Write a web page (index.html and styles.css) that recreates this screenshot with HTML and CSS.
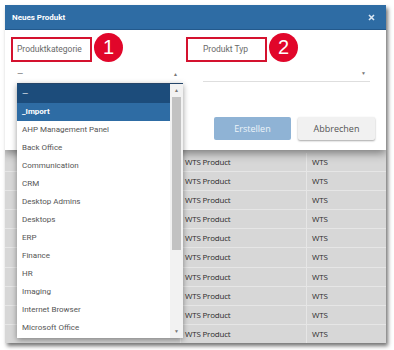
FILE: index.html
```html
<html>
<head>
<meta name="viewport" content="width=device-width, initial-scale=1">
<title>Neues Produkt</title>
<link rel="stylesheet" href="styles.css">
</head>
<body>
<div class="frame">
  <div class="dialog">
    <div class="dialog-head">
      <span class="dialog-title">Neues Produkt</span>
      <svg class="close" width="7" height="7" viewBox="0 0 7 7"><path d="M1 1L6 6M6 1L1 6" stroke="#dce8f4" stroke-width="1.6"/></svg>
    </div>
    <div class="dialog-body">
      <div class="fields">
        <div class="field field-cat">
          <div class="label-row">
            <span class="mark">Produktkategorie</span>
            <span class="badge">1</span>
          </div>
          <div class="select">
            <span>&mdash;</span>
            <span class="arrow">&#9650;</span>
          </div>
        </div>
        <div class="field field-typ">
          <div class="label-row">
            <span class="mark mark-typ">Produkt Typ</span>
            <span class="badge">2</span>
          </div>
          <div class="select select-line">
            <span></span>
            <span class="arrow">&#9660;</span>
          </div>
        </div>
      </div>
      <div class="actions">
        <button class="btn btn-primary">Erstellen</button>
        <button class="btn btn-cancel">Abbrechen</button>
      </div>
    </div>
  </div>

  <div class="table">
    <div class="row"><span class="c0"></span><span class="c1">WTS Product</span><span class="c2">WTS</span></div>
    <div class="row"><span class="c0"></span><span class="c1">WTS Product</span><span class="c2">WTS</span></div>
    <div class="row"><span class="c0"></span><span class="c1">WTS Product</span><span class="c2">WTS</span></div>
    <div class="row"><span class="c0"></span><span class="c1">WTS Product</span><span class="c2">WTS</span></div>
    <div class="row"><span class="c0"></span><span class="c1">WTS Product</span><span class="c2">WTS</span></div>
    <div class="row"><span class="c0"></span><span class="c1">WTS Product</span><span class="c2">WTS</span></div>
    <div class="row"><span class="c0"></span><span class="c1">WTS Product</span><span class="c2">WTS</span></div>
    <div class="row"><span class="c0"></span><span class="c1">WTS Product</span><span class="c2">WTS</span></div>
    <div class="row"><span class="c0"></span><span class="c1">WTS Product</span><span class="c2">WTS</span></div>
    <div class="row"><span class="c0"></span><span class="c1">WTS Product</span><span class="c2">WTS</span></div>
  </div>

  <div class="dropdown">
    <ul class="options">
      <li class="opt-head">&mdash;</li>
      <li class="opt-active">_Import</li>
      <li>AHP Management Panel</li>
      <li>Back Office</li>
      <li>Communication</li>
      <li>CRM</li>
      <li>Desktop Admins</li>
      <li>Desktops</li>
      <li>ERP</li>
      <li>Finance</li>
      <li>HR</li>
      <li>Imaging</li>
      <li>Internet Browser</li>
      <li>Microsoft Office</li>
    </ul>
    <div class="scrollbar">
      <span class="sb-arrow">&#9650;</span>
      <span class="sb-thumb"></span>
      <span class="sb-arrow">&#9660;</span>
    </div>
  </div>
</div>
</body>
</html>
```

FILE: styles.css
```css
html, body {
  margin: 0;
  padding: 0;
  background: #fff;
}

.frame {
  position: relative;
  margin: 5px 0 0 5px;
  width: 381px;
  height: 338px;
  overflow: hidden;
  background: #d7d7d7;
  box-shadow: 2px 3px 4px rgba(0, 0, 0, 0.55);
  font-family: Roboto, "Liberation Sans", sans-serif;
}

.dialog {
  position: relative;
  z-index: 2;
  background: #fff;
  box-shadow: 0 3px 9px rgba(0, 0, 0, 0.45);
}

.dialog-head {
  height: 24px;
  border-bottom: 1px solid #23598c;
  background: #2e6ca4;
  display: flex;
  justify-content: space-between;
  align-items: center;
  padding: 0 11px 0 7px;
}

.dialog-title {
  color: #fff;
  font-size: 8px;
  font-weight: bold;
}

.dialog-body {
  height: 120px;
  box-sizing: border-box;
  padding-top: 3px;
}

.fields {
  display: flex;
}

.field-cat {
  width: 175px;
  padding-left: 6px;
}

.field-typ {
  width: 184px;
}

.label-row {
  display: flex;
  align-items: flex-start;
  height: 30px;
}

.mark {
  display: block;
  box-sizing: border-box;
  width: 81px;
  height: 25px;
  border: 2px solid #d4122f;
  padding: 5px 0 0 4px;
  font-size: 8.5px;
  color: #6a6a6a;
  margin-top: 4px;
}

.mark-typ {
  padding-left: 15px;
}

.badge {
  width: 29px;
  height: 29px;
  border-radius: 50%;
  background: #e1062a;
  color: #fff;
  font-family: "Liberation Sans", sans-serif;
  font-size: 20px;
  line-height: 29px;
  text-align: center;
  margin-left: 2px;
}

.select {
  display: flex;
  justify-content: space-between;
  align-items: center;
  box-sizing: border-box;
  height: 17px;
  margin: 2px 4px 0 6px;
  padding-right: 4px;
  font-size: 8px;
  color: #555;
}

.field-typ .select {
  margin: 2px 0 0 17px;
}

.select-line {
  border-bottom: 1px solid #dedede;
}

.arrow {
  font-size: 5px;
  color: #777;
}

.actions {
  display: flex;
  justify-content: flex-end;
  gap: 7px;
  padding: 35px 11px 0 0;
}

.btn {
  width: 77px;
  height: 23px;
  border: 0;
  border-radius: 2px;
  font-family: "Open Sans", sans-serif;
  font-size: 9px;
  padding: 0;
}

.btn-primary {
  background: #8fb3d5;
  color: #edf3f9;
}

.btn-cancel {
  background: #f1f1f1;
  color: #555;
  box-shadow: 0 1px 2px rgba(0, 0, 0, 0.35);
}

.table {
  margin-top: 2.5px;
  position: relative;
  z-index: 1;
}

.row {
  display: flex;
  box-sizing: border-box;
  height: 19.2px;
  border-bottom: 1px solid #e6e6e6;
  font-family: "Open Sans", sans-serif;
  font-size: 8px;
  color: #2c2c2c;
  line-height: 18px;
}

.c0 {
  width: 175px;
  border-right: 1px solid #e6e6e6;
}

.c1 {
  width: 121px;
  padding-left: 4px;
  border-right: 1px solid #e6e6e6;
  letter-spacing: -0.2px;
}

.c2 {
  padding-left: 5px;
  letter-spacing: -0.2px;
}

.dropdown {
  position: absolute;
  z-index: 3;
  left: 12px;
  top: 78px;
  width: 166px;
  height: 254px;
  display: flex;
  background: #fff;
  border-top: 1px solid #25466a;
  box-shadow: 0 2px 6px rgba(0, 0, 0, 0.4);
}

.options {
  flex: 1;
  margin: 0;
  padding: 0;
  list-style: none;
  font-size: 8px;
  color: #555;
}

.options li {
  height: 18px;
  line-height: 18px;
  padding-left: 5px;
}

.options .opt-head {
  height: 19px;
  line-height: 19px;
  background: #1c4c7b;
  color: #fff;
}

.options .opt-active {
  background: #2e6ca4;
  color: #fff;
  font-weight: bold;
}

.scrollbar {
  width: 13px;
  background: #f2f2f2;
  display: flex;
  flex-direction: column;
  align-items: center;
}

.sb-arrow {
  font-size: 5px;
  color: #777;
  height: 13px;
  line-height: 13px;
}

.sb-thumb {
  width: 9px;
  height: 153px;
  background: #c2c2c2;
}

.scrollbar .sb-arrow:last-child {
  margin-top: auto;
}
```
